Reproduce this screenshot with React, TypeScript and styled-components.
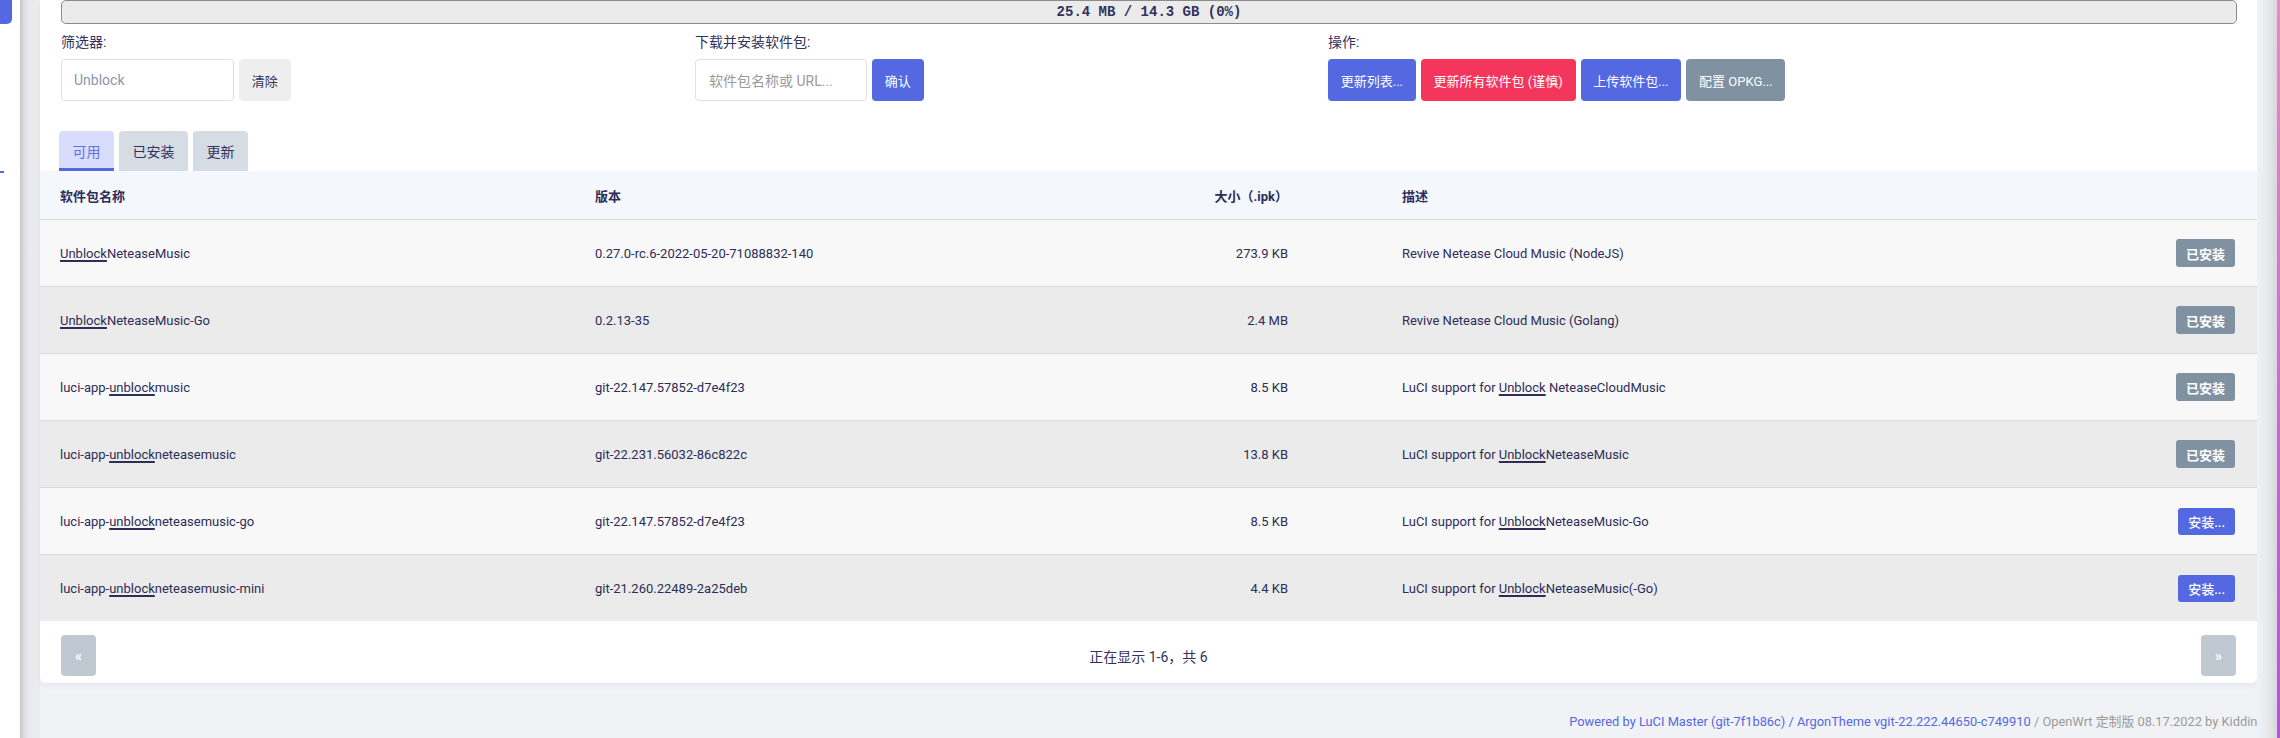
import React from "react";
import styled, { createGlobalStyle } from "styled-components";

const Global = createGlobalStyle`
  html, body { margin: 0; padding: 0; }
  body {
    width: 2280px;
    height: 738px;
    overflow: hidden;
    background: #f1f2f6;
    font-family: Roboto, "Noto Sans CJK SC", sans-serif;
    color: #32325d;
  }
  * { box-sizing: border-box; }
`;

const Page = styled.div`
  display: flex;
  width: 2280px;
  height: 738px;
`;

const LeftRail = styled.div`
  width: 20px;
  background: #ffffff;
  display: flex;
  flex-direction: column;
`;

const RailActive = styled.div`
  width: 12px;
  height: 24px;
  background: #5468e2;
  border-bottom-right-radius: 5px;
`;

const RailMark = styled.div`
  width: 4px;
  height: 2px;
  margin-top: 147px;
  background: #5468e2;
`;

const RailShadow = styled.div`
  width: 20px;
  background: linear-gradient(to right, #c4c4c9 0%, #dcdce1 20%, #e9e9ee 45%, #ececf0 100%);
`;

const Main = styled.div`
  width: 2217px;
  display: flex;
  flex-direction: column;
`;

const RightShadow = styled.div`
  width: 20px;
  background: linear-gradient(to right, #f1f2f6 0%, #e6e6eb 60%, #d6d6dc 100%);
`;

const EdgeLine = styled.div`
  width: 3px;
  background: linear-gradient(to bottom, #e88ac4, #c866d6 60%, #b552e0);
`;

const Card = styled.div`
  background: #ffffff;
  border-radius: 0 0 6px 6px;
  box-shadow: 0 2px 6px rgba(50, 50, 93, 0.06);
  overflow: hidden;
`;

const Top = styled.div`
  padding: 0 20px 0 21px;
`;

const Usage = styled.div`
  height: 24px;
  border: 1px solid #8c8c8c;
  border-radius: 5px;
  background: #ebebeb;
  display: flex;
  align-items: center;
  justify-content: center;
  font-family: "Liberation Mono", monospace;
  font-weight: bold;
  font-size: 14px;
  color: #32325d;
`;

const Controls = styled.div`
  display: grid;
  grid-template-columns: 634px 633px 1fr;
  margin-top: 8px;
`;

const Group = styled.div`
  display: flex;
  flex-direction: column;
`;

const Label = styled.div`
  font-size: 14px;
  line-height: 20px;
  height: 20px;
  margin-bottom: 7px;
  color: #32325d;
`;

const Row = styled.div`
  display: flex;
  gap: 5px;
  height: 42px;
`;

const Input = styled.div<{ $w: number; $muted?: boolean }>`
  width: ${(p) => p.$w}px;
  height: 42px;
  border: 1px solid #dde1e6;
  border-radius: 4px;
  background: #fff;
  display: flex;
  align-items: center;
  padding-left: ${(p) => (p.$muted ? 13 : 12)}px;
  font-size: 14px;
  color: ${(p) => (p.$muted ? "#9a9a9a" : "#8898aa")};
`;

const Btn = styled.button<{ $bg: string; $fg?: string }>`
  height: 42px;
  padding: 0 12.75px;
  border: none;
  border-radius: 4px;
  background: ${(p) => p.$bg};
  color: ${(p) => p.$fg || "#ffffff"};
  font-family: Roboto, "Noto Sans CJK SC", sans-serif;
  font-size: 13px;
  white-space: nowrap;
  cursor: pointer;
`;

const Tabs = styled.div`
  display: flex;
  gap: 5px;
  margin-top: 30px;
  height: 40px;
  margin-left: -2px;
`;

const Tab = styled.div<{ $active?: boolean }>`
  height: 40px;
  padding: 0 13.5px;
  border-radius: 4px 4px 0 0;
  display: flex;
  align-items: center;
  font-size: 14px;
  background: ${(p) => (p.$active ? "#d8dcfd" : "#d5dce3")};
  color: ${(p) => (p.$active ? "#5e72e4" : "#32325d")};
  border-bottom: 3px solid ${(p) => (p.$active ? "#5468e2" : "transparent")};
  padding-top: 3px;
`;

const Grid = styled.div<{ $head?: boolean; $alt?: boolean }>`
  display: grid;
  grid-template-columns: 535px 510px 183px 1fr auto;
  align-items: center;
  padding: 0 22px 0 20px;
  height: ${(p) => (p.$head ? 49 : 67)}px;
  background: ${(p) => (p.$head ? "#f4f7fc" : p.$alt ? "#ebebeb" : "#f8f8f8")};
  border-bottom: 1px solid #dadada;
  font-size: 13px;
  font-weight: ${(p) => (p.$head ? 700 : 400)};
  color: #2d2d58;
  &:last-child { border-bottom: none; height: 66px; }
`;

const Cell = styled.div<{ $right?: boolean; $desc?: boolean }>`
  text-align: ${(p) => (p.$right ? "right" : "left")};
  padding-left: ${(p) => (p.$desc ? 114 : 0)}px;
  white-space: nowrap;
`;

const Mark = styled.span`
  text-decoration: underline;
  text-decoration-thickness: 1.5px;
  text-underline-offset: 2px;
`;

const RowBtn = styled.button<{ $installed?: boolean }>`
  height: ${(p) => (p.$installed ? 28 : 27)}px;
  padding: 0 10px;
  border: none;
  border-radius: 3px;
  background: ${(p) => (p.$installed ? "#8091a2" : "#5468e2")};
  color: #fff;
  font-family: Roboto, "Noto Sans CJK SC", sans-serif;
  font-size: 13px;
  font-weight: ${(p) => (p.$installed ? 700 : 500)};
  white-space: nowrap;
`;

const Pager = styled.div`
  display: flex;
  align-items: center;
  justify-content: space-between;
  padding: 14px 21px 7px 21px;
`;

const PageBtn = styled.div`
  width: 35px;
  height: 41px;
  border-radius: 4px;
  background: #c0c8d2;
  color: #fff;
  display: flex;
  align-items: center;
  justify-content: center;
  font-size: 14px;
  font-weight: 700;
`;

const PageInfo = styled.div`
  font-size: 14px;
  color: #32325d;
`;

const Footer = styled.div`
  margin-top: 29px;
  text-align: right;
  font-size: 12.85px;
  line-height: 20px;
  color: #9b9b9b;
  white-space: nowrap;
  margin-right: -2px;
`;

const FooterLink = styled.span`
  color: #5468e2;
`;

type Seg = { pre: string; mark: string; post: string };
type Pkg = { name: Seg; version: string; size: string; desc: Seg; installed: boolean };

const pkgs: Pkg[] = [
  {
    name: { pre: "", mark: "Unblock", post: "NeteaseMusic" },
    version: "0.27.0-rc.6-2022-05-20-71088832-140",
    size: "273.9 KB",
    desc: { pre: "Revive Netease Cloud Music (NodeJS)", mark: "", post: "" },
    installed: true,
  },
  {
    name: { pre: "", mark: "Unblock", post: "NeteaseMusic-Go" },
    version: "0.2.13-35",
    size: "2.4 MB",
    desc: { pre: "Revive Netease Cloud Music (Golang)", mark: "", post: "" },
    installed: true,
  },
  {
    name: { pre: "luci-app-", mark: "unblock", post: "music" },
    version: "git-22.147.57852-d7e4f23",
    size: "8.5 KB",
    desc: { pre: "LuCI support for ", mark: "Unblock", post: " NeteaseCloudMusic" },
    installed: true,
  },
  {
    name: { pre: "luci-app-", mark: "unblock", post: "neteasemusic" },
    version: "git-22.231.56032-86c822c",
    size: "13.8 KB",
    desc: { pre: "LuCI support for ", mark: "Unblock", post: "NeteaseMusic" },
    installed: true,
  },
  {
    name: { pre: "luci-app-", mark: "unblock", post: "neteasemusic-go" },
    version: "git-22.147.57852-d7e4f23",
    size: "8.5 KB",
    desc: { pre: "LuCI support for ", mark: "Unblock", post: "NeteaseMusic-Go" },
    installed: false,
  },
  {
    name: { pre: "luci-app-", mark: "unblock", post: "neteasemusic-mini" },
    version: "git-21.260.22489-2a25deb",
    size: "4.4 KB",
    desc: { pre: "LuCI support for ", mark: "Unblock", post: "NeteaseMusic(-Go)" },
    installed: false,
  },
];

const Text = ({ s }: { s: Seg }) => (
  <>
    {s.pre}
    {s.mark && <Mark>{s.mark}</Mark>}
    {s.post}
  </>
);

export default function App() {
  return (
    <>
      <Global />
      <Page>
        <LeftRail>
          <RailActive />
          <RailMark />
        </LeftRail>
        <RailShadow />
        <Main>
          <Card>
            <Top>
              <Usage>25.4 MB / 14.3 GB (0%)</Usage>
              <Controls>
                <Group>
                  <Label>筛选器:</Label>
                  <Row>
                    <Input $w={173}>Unblock</Input>
                    <Btn $bg="#eeeeee" $fg="#32325d">清除</Btn>
                  </Row>
                </Group>
                <Group>
                  <Label>下载并安装软件包:</Label>
                  <Row>
                    <Input $w={172} $muted>软件包名称或 URL...</Input>
                    <Btn $bg="#5468e2">确认</Btn>
                  </Row>
                </Group>
                <Group>
                  <Label>操作:</Label>
                  <Row>
                    <Btn $bg="#5468e2">更新列表...</Btn>
                    <Btn $bg="#f5365c">更新所有软件包 (谨慎)</Btn>
                    <Btn $bg="#5468e2">上传软件包...</Btn>
                    <Btn $bg="#8091a2">配置 OPKG...</Btn>
                  </Row>
                </Group>
              </Controls>
              <Tabs>
                <Tab $active>可用</Tab>
                <Tab>已安装</Tab>
                <Tab>更新</Tab>
              </Tabs>
            </Top>
            <div>
              <Grid $head>
                <Cell>软件包名称</Cell>
                <Cell>版本</Cell>
                <Cell $right>大小（.ipk）</Cell>
                <Cell $desc>描述</Cell>
                <Cell />
              </Grid>
              {pkgs.map((p, i) => (
                <Grid key={i} $alt={i % 2 === 1}>
                  <Cell>
                    <Text s={p.name} />
                  </Cell>
                  <Cell>{p.version}</Cell>
                  <Cell $right>{p.size}</Cell>
                  <Cell $desc>
                    <Text s={p.desc} />
                  </Cell>
                  <Cell>
                    <RowBtn $installed={p.installed}>{p.installed ? "已安装" : "安装..."}</RowBtn>
                  </Cell>
                </Grid>
              ))}
            </div>
            <Pager>
              <PageBtn>«</PageBtn>
              <PageInfo>正在显示 1-6，共 6</PageInfo>
              <PageBtn>»</PageBtn>
            </Pager>
          </Card>
          <Footer>
            <FooterLink>Powered by LuCI Master (git-7f1b86c) / ArgonTheme vgit-22.222.44650-c749910</FooterLink>
            {" / OpenWrt 定制版 08.17.2022 by Kiddin'"}
          </Footer>
        </Main>
        <RightShadow />
        <EdgeLine />
      </Page>
    </>
  );
}
